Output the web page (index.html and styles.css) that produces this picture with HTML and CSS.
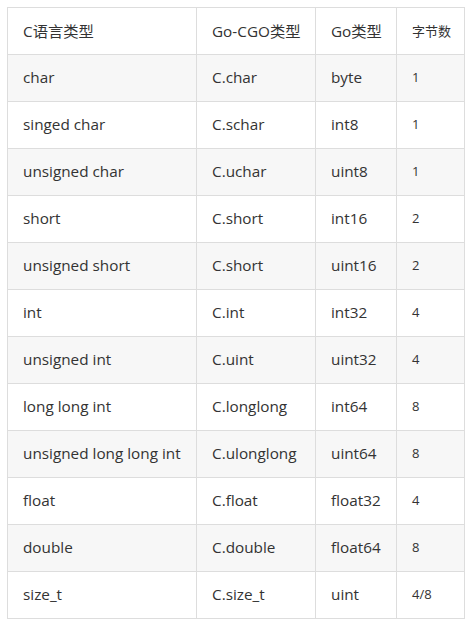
FILE: index.html
```html
<!DOCTYPE html>
<html>
<head>
<meta charset="utf-8">
<link rel="stylesheet" href="styles.css">
</head>
<body>
<table class="types">
  <colgroup>
    <col class="c1"><col class="c2"><col class="c3"><col class="c4">
  </colgroup>
  <thead>
    <tr><th>C语言类型</th><th>Go-CGO类型</th><th>Go类型</th><th class="small">字节数</th></tr>
  </thead>
  <tbody>
    <tr><td>char</td><td>C.char</td><td>byte</td><td class="small">1</td></tr>
    <tr><td>singed char</td><td>C.schar</td><td>int8</td><td class="small">1</td></tr>
    <tr><td>unsigned char</td><td>C.uchar</td><td>uint8</td><td class="small">1</td></tr>
    <tr><td>short</td><td>C.short</td><td>int16</td><td class="small">2</td></tr>
    <tr><td>unsigned short</td><td>C.short</td><td>uint16</td><td class="small">2</td></tr>
    <tr><td>int</td><td>C.int</td><td>int32</td><td class="small">4</td></tr>
    <tr><td>unsigned int</td><td>C.uint</td><td>uint32</td><td class="small">4</td></tr>
    <tr><td>long long int</td><td>C.longlong</td><td>int64</td><td class="small">8</td></tr>
    <tr><td>unsigned long long int</td><td>C.ulonglong</td><td>uint64</td><td class="small">8</td></tr>
    <tr><td>float</td><td>C.float</td><td>float32</td><td class="small">4</td></tr>
    <tr><td>double</td><td>C.double</td><td>float64</td><td class="small">8</td></tr>
    <tr><td>size_t</td><td>C.size_t</td><td>uint</td><td class="small">4/8</td></tr>
  </tbody>
</table>
</body>
</html>
```
FILE: styles.css
```css
html, body {
  margin: 0;
  padding: 0;
  background: #ffffff;
}
body {
  padding: 7px;
  font-family: "Open Sans", "Noto Sans CJK SC", sans-serif;
  color: #333333;
}
.types {
  border-collapse: collapse;
  table-layout: fixed;
  width: 457px;
  font-size: 15.3px;
}
.c1 { width: 189px; }
.c2 { width: 119px; }
.c3 { width: 81px; }
.c4 { width: 68px; }
.types th, .types td {
  border: 1px solid #dddddd;
  height: 47px;
  padding: 0 0 2px 15px;
  box-sizing: border-box;
  text-align: left;
  font-weight: normal;
  vertical-align: middle;
  white-space: nowrap;
}
.types tbody tr:nth-child(odd) td {
  background: #f7f7f7;
}
.types .small {
  font-size: 13px;
}
```
